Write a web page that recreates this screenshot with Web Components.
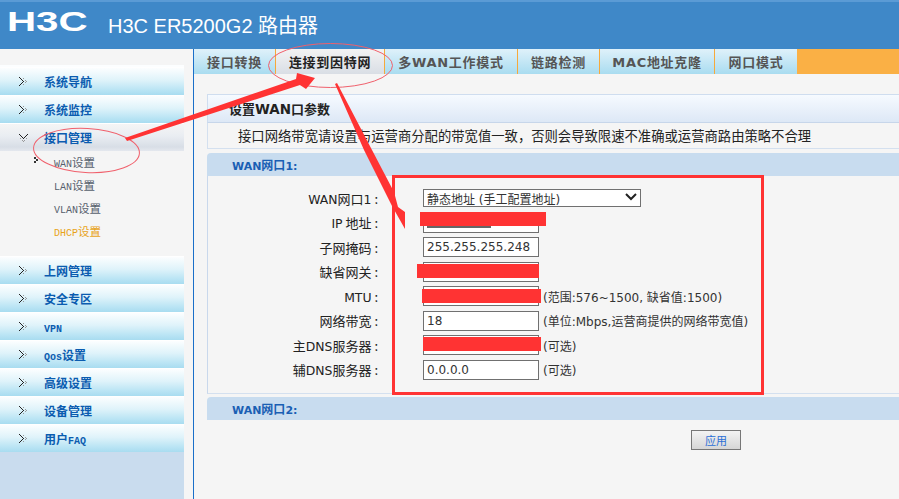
<!DOCTYPE html>
<html lang="zh">
<head>
<meta charset="utf-8">
<title>H3C ER5200G2</title>
<style>
  html, body { margin: 0; height: 100%; overflow: hidden; }
  body { font-family: "Liberation Sans", "Noto Sans CJK SC", sans-serif; background: #f5f5f5; }
  #page { position: relative; width: 899px; height: 499px; overflow: hidden; display: grid; grid-template-rows: 49px 1fr; grid-template-columns: 194px 1fr; }
  router-header { grid-column: 1 / 3; }
</style>
</head>
<body>
<div id="page">
  <router-header>H3C ER5200G2 路由器</router-header>
  <side-nav></side-nav>
  <main-pane></main-pane>
  <mark-up></mark-up>
</div>

<script>
const CJK = '"Noto Sans CJK SC", sans-serif';
const VERD = '"DejaVu Sans", "Noto Sans CJK SC", sans-serif';

class RouterHeader extends HTMLElement {
  constructor() {
    super();
    this.attachShadow({ mode: "open" }).innerHTML = `
    <style>
      :host { display: flex; align-items: center; height: 49px; box-sizing: border-box; padding-bottom: 2px;
        background: #3f88c8; border-top: 2px solid #5b9bd5; color: #fff; overflow: hidden; }
      .logo { width: 108px; flex: none; margin-top: -5px; padding-left: 7px; box-sizing: border-box; font: bold 28px/28px "Liberation Sans", sans-serif; }
      .logo span { display: inline-block; transform: scaleX(1.44); transform-origin: left center; }
      .name { font: 20px "Liberation Sans", "Noto Sans CJK SC", sans-serif; }
    </style>
    <div class="logo"><span>H3C</span></div>
    <div class="name"><slot></slot></div>`;
  }
}

class NavItem extends HTMLElement {
  constructor() {
    super();
    this.attachShadow({ mode: "open" }).innerHTML = `
    <style>
      :host { display: flex; align-items: center; height: 28px; box-sizing: border-box; width: 184px;
        padding-left: 18px; gap: 16px; color: #0b5cb0; font: bold 12px ${CJK};
        background: linear-gradient(#fcfeff 0%, #dff3fa 45%, #b9e4f4 82%, #a8dcf0 100%);
        border-top: 1px solid #fff; }
      :host([open]) { background: linear-gradient(#f5f5f5 0%, #e9edf2 45%, #d8dee6 85%, #e4e8ee 100%); }
      svg { flex: none; width: 10px; height: 10px; }
      :host([open]) svg { transform: rotate(90deg); }
    </style>
    <svg viewBox="0 0 10 10"><path fill="#222" d="M1 0h1v1H1zM3 2h1v1H3zM5 4h1v1H5zM3 6h1v1H3zM1 8h1v1H1zM2 1h1v1H2zM4 3h1v1H4zM4 5h1v1H4zM2 7h1v1H2z"/><path fill="#999" d="M5 1h1v1H5zM7 3h1v1H7zM8 4h1v1H8zM7 5h1v1H7zM5 7h1v1H5z"/></svg>
    <span><slot></slot></span>`;
  }
}

class SubItem extends HTMLElement {
  constructor() {
    super();
    this.attachShadow({ mode: "open" }).innerHTML = `
    <style>
      :host { display: flex; align-items: center; height: 23px; padding-left: 54px; position: relative;
        color: #55606c; font: 11.500px ${CJK}; }
      :host([hot]) { color: #e8a317; }
      .dot { display: none; position: absolute; left: 34px; top: 7px; width: 6px; height: 6px; }
      :host([current]) .dot { display: block; }
    </style>
    <svg class="dot" viewBox="0 0 6 6" fill="#333"><path d="M0 0h2v2H0zM2 2h2v2H2zM0 4h2v2H0z"/></svg>
    <span><slot></slot></span>`;
  }
}

class SideNav extends HTMLElement {
  constructor() {
    super();
    this.attachShadow({ mode: "open" }).innerHTML = `
    <style>
      :host { display: block; box-sizing: border-box; width: 194px; background: #f5f5f5; border-right: 1px solid #1a6fc9; }
      .col { width: 184px; height: 100%; display: flex; flex-direction: column; padding-top: 16px; box-sizing: border-box; }
      .cap { height: 2px; background: #fcfeff; }
      .subs { margin-top: -1px; padding: 0 0 14px; }
      .fill { flex: 1; background: #c9dcee; }
      nav-item .l { font: bold 10px "Liberation Mono", monospace; }
      sub-item .l { font: 10px "Liberation Mono", monospace; }
    </style>
    <div class="col">
      <div class="cap"></div>
      <nav-item>系统导航</nav-item>
      <nav-item>系统监控</nav-item>
      <nav-item open>接口管理</nav-item>
      <div class="subs">
        <sub-item current><span class="l">WAN</span>设置</sub-item>
        <sub-item><span class="l">LAN</span>设置</sub-item>
        <sub-item><span class="l">VLAN</span>设置</sub-item>
        <sub-item hot><span class="l">DHCP</span>设置</sub-item>
      </div>
      <nav-item>上网管理</nav-item>
      <nav-item>安全专区</nav-item>
      <nav-item><span class="l">VPN</span></nav-item>
      <nav-item><span class="l">Qos</span>设置</nav-item>
      <nav-item>高级设置</nav-item>
      <nav-item>设备管理</nav-item>
      <nav-item>用户<span class="l">FAQ</span></nav-item>
      <div class="fill"></div>
    </div>`;
  }
}

class TabBar extends HTMLElement {
  constructor() {
    super();
    const tabs = [["接口转换", 82, 0], ["连接到因特网", 109, 1], ["多WAN工作模式", 133, 0], ["链路检测", 82, 0], ["MAC地址克隆", 115, 0], ["网口模式", 82, 0]];
    this.attachShadow({ mode: "open" }).innerHTML = `
    <style>
      :host { display: flex; height: 25px; background: #fab045; font: bold 13px ${VERD}; letter-spacing: .7px; color: #555; }
      div { box-sizing: border-box; display: flex; align-items: center; justify-content: center; flex: none;
        background: linear-gradient(#dff1fa, #a9dcf0); border-right: 1px solid #f6a93b; }
      div.on { background: linear-gradient(#f3f3f3, #d9dee5); color: #222; }
      div:last-child { border-right: 0; }
    </style>
    ${tabs.map(t => `<div class="${t[2] ? "on" : ""}" style="width:${t[1]}px">${t[0]}</div>`).join("")}`;
  }
}

class SectionBar extends HTMLElement {
  constructor() {
    super();
    this.attachShadow({ mode: "open" }).innerHTML = `
    <style>
      :host { display: flex; align-items: center; height: 23px; padding-left: 25px; background: #c8dcef; border-radius: 4px 0 0 0;
        color: #1a5fb4; font: bold 12px ${CJK}; }
    </style>
    <span><slot></slot></span>`;
  }
}

class FormRow extends HTMLElement {
  constructor() {
    super();
    this.attachShadow({ mode: "open" }).innerHTML = `
    <style>
      :host { display: grid; grid-template-columns: 173px 1fr; column-gap: 42px; align-items: center; height: 24.5px; font: 13px ${CJK}; color: #222; }
      .label { text-align: right; padding-right: 3px; }
      .ctl { display: flex; align-items: center; gap: 4px; font: 12px ${VERD}; color: #333; }
      ::slotted(field-box) { flex: none; }
    </style>
    <div class="label"><slot name="label"></slot> :</div>
    <div class="ctl"><slot></slot></div>`;
  }
}

class FieldBox extends HTMLElement {
  constructor() {
    super();
    this.attachShadow({ mode: "open" }).innerHTML = `
    <style>
      :host { display: flex; align-items: center; box-sizing: border-box; width: 116px; height: 20px; padding-left: 3px;
        border: 1px solid #707070; background: #fff; font: 12px ${VERD}; color: #333; position: relative; }
      :host([select]) { width: 218px; height: 18px; }
      svg { display: none; position: absolute; right: 3px; top: 3px; width: 12px; height: 8px; }
      :host([select]) svg { display: block; }
    </style>
    <span><slot></slot></span>
    <svg viewBox="0 0 12 8"><path d="M1 1l5 5 5-5" fill="none" stroke="#222" stroke-width="2"/></svg>`;
  }
}

class MainPane extends HTMLElement {
  constructor() {
    super();
    this.attachShadow({ mode: "open" }).innerHTML = `
    <style>
      :host { display: block; min-width: 0; font-family: ${CJK}; }
      .wrap { padding: 20px 0 0 13px; }
      .title { box-sizing: border-box; height: 29px; display: flex; align-items: center; padding-left: 21px; font: bold 13px ${CJK}; color: #222;
        background: linear-gradient(#f6faff, #dde8f6); border: 1px solid #cfddef; border-right: 0; border-bottom-color: #c7d6ea; }
      .title .l { font: bold 13.500px "DejaVu Sans", sans-serif; }
      .desc { box-sizing: border-box; height: 26px; display: flex; align-items: center; padding-left: 30px; font-size: 13.330px; color: #222;
        border: 1px solid #d4e0ef; border-top: 0; border-right: 0; margin-bottom: 4px; }
      .panel { box-sizing: border-box; height: 218px; padding-top: 10px; border-left: 1px solid #c9d8ec; border-bottom: 1px solid #d4e0ef; margin-bottom: 3px; }
      section-bar .l { font: bold 11px "DejaVu Sans", sans-serif; }
      form-row .l { font: 12.400px "DejaVu Sans", sans-serif; }
      .actions { display: flex; padding: 10px 0 0 484px; }
      .btn { box-sizing: border-box; width: 50px; height: 20px; display: flex; align-items: center; justify-content: center;
        border: 1px solid #777; background: linear-gradient(#f3f3f3, #d6d6d6); color: #2b6fd6; font-size: 11px; }
    </style>
    <tab-bar></tab-bar>
    <div class="wrap">
      <div class="title"><span>设置<span class="l">WAN</span>口参数</span></div>
      <div class="desc">接口网络带宽请设置与运营商分配的带宽值一致，否则会导致限速不准确或运营商路由策略不合理</div>
      <section-bar><span class="l">WAN</span>网口<span class="l">1:</span></section-bar>
      <div class="panel">
        <form-row><span slot="label"><span class="l">WAN</span>网口<span class="l">1</span></span><field-box select>静态地址 (手工配置地址)</field-box></form-row>
        <form-row><span slot="label"><span class="l">IP</span> 地址</span><field-box></field-box></form-row>
        <form-row><span slot="label">子网掩码</span><field-box>255.255.255.248</field-box></form-row>
        <form-row><span slot="label">缺省网关</span><field-box></field-box></form-row>
        <form-row><span slot="label"><span class="l">MTU</span></span><field-box></field-box><span>(范围:576~1500, 缺省值:1500)</span></form-row>
        <form-row><span slot="label">网络带宽</span><field-box>18</field-box><span>(单位:Mbps,运营商提供的网络带宽值)</span></form-row>
        <form-row><span slot="label">主<span class="l">DNS</span>服务器</span><field-box></field-box><span>(可选)</span></form-row>
        <form-row><span slot="label">辅<span class="l">DNS</span>服务器</span><field-box>0.0.0.0</field-box><span>(可选)</span></form-row>
      </div>
      <section-bar><span class="l">WAN</span>网口<span class="l">2:</span></section-bar>
      <div class="actions"><div class="btn">应用</div></div>
    </div>`;
  }
}

// red annotations drawn over the screenshot
class MarkUp extends HTMLElement {
  constructor() {
    super();
    this.attachShadow({ mode: "open" }).innerHTML = `
    <style>
      :host { position: absolute; left: 0; top: 0; width: 899px; height: 499px; pointer-events: none; }
      svg { display: block; }
    </style>
    <svg width="899" height="499" viewBox="0 0 899 499">
      <ellipse cx="330.500" cy="65.500" rx="62" ry="22" fill="none" stroke="#f0606c" stroke-width="1"/>
      <ellipse cx="86.500" cy="150.500" rx="53" ry="22" fill="none" stroke="#f0606c" stroke-width="1" transform="rotate(3 86.500 150.500)"/>
      <path d="M125 138 L296 79 L297 73 L315 78 L306 89 L300 85 L127 141 Z" fill="#f33"/>
      <path d="M335 84 L337 83 L372 150 L394 192 L398 207 L405 212 L405 229 L392 206 L364 150 Z" fill="#f33"/>
      <rect x="393.500" y="176.500" width="369" height="217" fill="none" stroke="#f33" stroke-width="3"/>
      <rect x="427" y="226" width="64" height="2" fill="#666"/>
      <rect x="420" y="212" width="126" height="14" fill="#f33"/>
      <rect x="417" y="264" width="122" height="14" fill="#f33"/>
      <rect x="422" y="289" width="119" height="14" fill="#f33"/>
      <rect x="423" y="337" width="118" height="14" fill="#f33"/>
    </svg>`;
  }
}

customElements.define("router-header", RouterHeader);
customElements.define("nav-item", NavItem);
customElements.define("sub-item", SubItem);
customElements.define("side-nav", SideNav);
customElements.define("tab-bar", TabBar);
customElements.define("section-bar", SectionBar);
customElements.define("field-box", FieldBox);
customElements.define("form-row", FormRow);
customElements.define("main-pane", MainPane);
customElements.define("mark-up", MarkUp);
</script>
</body>
</html>
